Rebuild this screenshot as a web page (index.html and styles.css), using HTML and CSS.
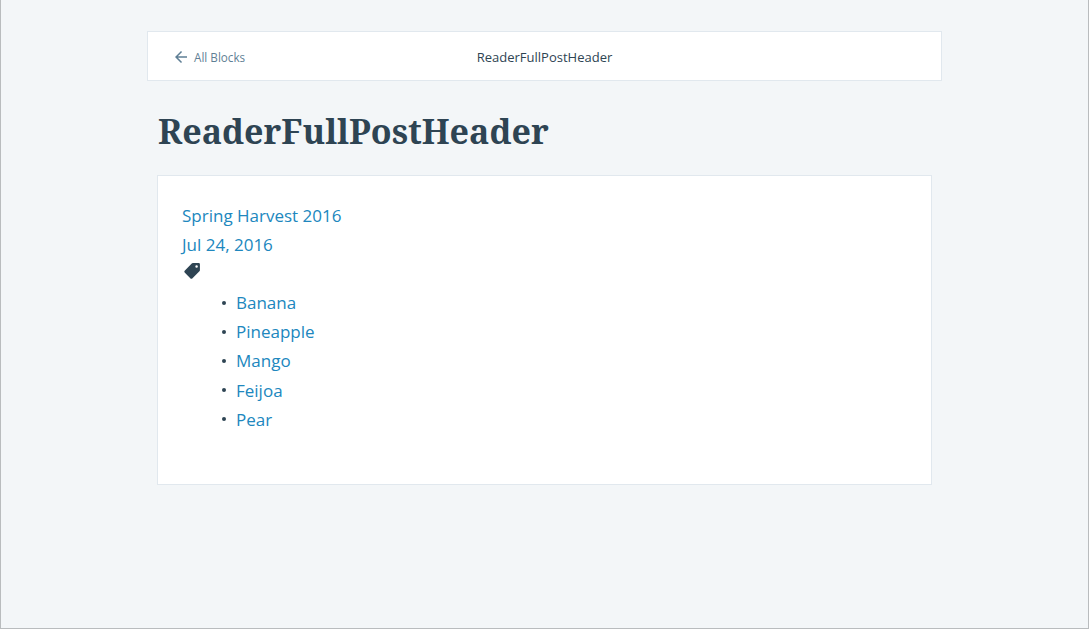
FILE: index.html
```html
<!DOCTYPE html>
<html lang="en">
<head>
<meta charset="utf-8">
<title>ReaderFullPostHeader</title>
<link rel="stylesheet" href="styles.css">
</head>
<body>
<div class="frame">
  <main class="wrap">
    <header class="topbar">
      <a class="back" href="#">
        <svg class="back-icon" viewBox="0 0 24 24" width="18" height="18"><path d="M20 11H7.83l5.59-5.59L12 4l-8 8 8 8 1.41-1.41L7.83 13H20z"/></svg>
        <span>All Blocks</span>
      </a>
      <div class="topbar-title">ReaderFullPostHeader</div>
    </header>
    <h1 class="page-title">ReaderFullPostHeader</h1>
    <section class="card">
      <div class="line"><a href="#">Spring Harvest 2016</a></div>
      <div class="line"><a href="#">Jul 24, 2016</a></div>
      <svg class="tag-icon" viewBox="0 0 24 24" width="20" height="20"><path fill-rule="evenodd" d="M13 2.5H20a1.5 1.5 0 0 1 1.5 1.5v7c0 .5-.2 1-.6 1.3l-8.600 8.600a1.5 1.5 0 0 1-2.100 0l-7-7a1.500 1.500 0 0 1 0-2.100l8.500-8.700c.3-.4.800-.6 1.300-.6zM17.500 5a1.500 1.500 0 1 0 0 3 1.500 1.500 0 0 0 0-3z"/></svg>
      <ul class="tags">
        <li><a href="#">Banana</a></li>
        <li><a href="#">Pineapple</a></li>
        <li><a href="#">Mango</a></li>
        <li><a href="#">Feijoa</a></li>
        <li><a href="#">Pear</a></li>
      </ul>
    </section>
  </main>
</div>
</body>
</html>
```
FILE: styles.css
```css
* { box-sizing: border-box; }
html, body { margin: 0; height: 100%; }
body {
  font-family: "Open Sans", "Noto Sans", sans-serif;
  color: #2e4453;
  background: #f3f6f8;
}
a { color: #2087be; text-decoration: none; }
.frame {
  height: 629px;
  border: 1px solid #b9bcbe;
  border-top: 0;
  padding-top: 31px;
}
.wrap {
  width: 795px;
  margin-left: 146px;
}
.topbar {
  position: relative;
  height: 50px;
  background: #fff;
  border: 1px solid #e1e8ee;
  display: flex;
  align-items: center;
  justify-content: center;
}
.back {
  position: absolute;
  left: 24px;
  top: 15px;
  display: flex;
  align-items: center;
  gap: 4px;
  font-size: 11.7px;
  line-height: 18px;
  color: #5f7f95;
}
.back span { padding-top: 1px; }
.back-icon { fill: #5f7f95; }
.topbar-title { font-size: 13px; line-height: 20px; margin-top: 2px; }
.page-title {
  margin: 28px 0 0 11px;
  font-family: "Noto Serif", "DejaVu Serif", serif;
  font-weight: 700;
  font-size: 34px;
  line-height: 44px;
  color: #2e4453;
  height: 66px;
}
.card {
  width: 775px;
  height: 310px;
  margin-left: 10px;
  background: #fff;
  border: 1px solid #e1e8ee;
  padding: 25px 24px;
  font-size: 17px;
  line-height: 29.2px;
}
.tag-icon { display: block; fill: #2e4453; margin-top: 2px; }
.tags { margin: 6.6px 0 0; padding-left: 40px; list-style: none; }
.tags li { display: flex; align-items: center; gap: 10px; height: 29.2px; }
.tags li::before {
  content: "";
  width: 4px;
  height: 4px;
  border-radius: 50%;
  background: #2e4453;
}
```
